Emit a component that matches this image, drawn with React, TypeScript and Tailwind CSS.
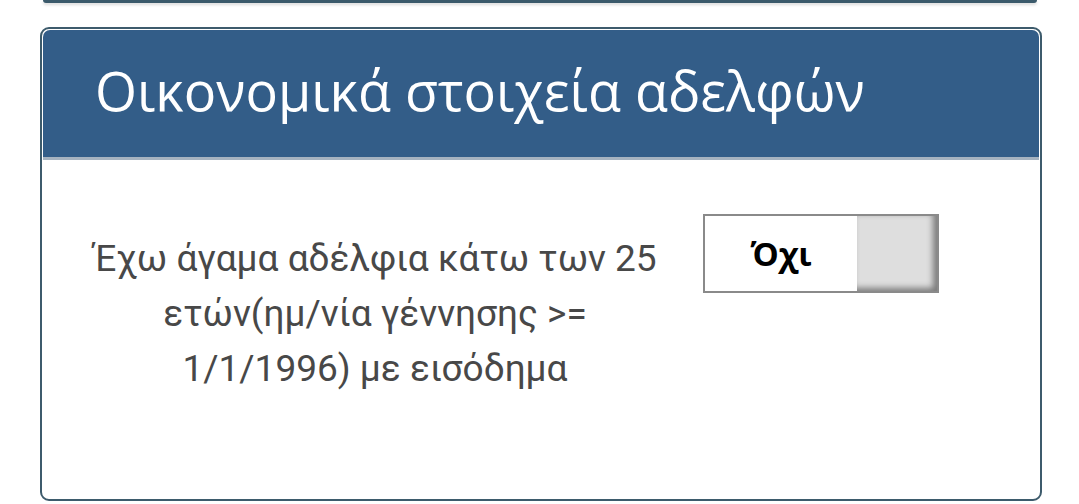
import React from 'react';

const ToggleSwitch: React.FC<{ label: string }> = ({ label }) => {
    return (
        <div className="flex h-[79px] w-[236px] border-2 border-[#8a8a8a] bg-white">
            <div
                className="flex flex-1 items-center justify-center font-bold text-black text-[33px]"
                style={{ fontFamily: '"Open Sans", "DejaVu Sans", sans-serif' }}
            >
                {label}
            </div>
            <div className="w-[80px] bg-[#dedede] shadow-[inset_-4px_-3px_6px_rgba(0,0,0,0.45)]"></div>
        </div>
    );
};

export default function App() {
    return (
        <div className="w-[1079px] h-[504px] bg-white overflow-hidden">
            {/* tail of the previous card */}
            <div className="ml-[43px] w-[994px] h-[3px] bg-[#3b5a6b] rounded-b-[3px] shadow-[0_2px_3px_rgba(0,0,0,0.15)]"></div>

            <div className="ml-[40px] w-[1002px] mt-[24px] h-[474px] border-2 border-[#3d5b6c] rounded-[9px] p-px flex flex-col">
                <div className="h-[130px] bg-[#335d88] rounded-t-[7px] flex items-center pl-[52px] pb-[8px] border-b-[3px] border-[#a6b3c0]">
                    <h2
                        className="text-white text-[54px] leading-none"
                        style={{ fontFamily: '"Open Sans", "Noto Sans", sans-serif' }}
                    >
                        Οικονομικά στοιχεία αδελφών
                    </h2>
                </div>

                <div className="flex items-start pt-[54px] pl-[37px]">
                    <div
                        className="w-[590px] pt-[17px] text-center text-[#484848] text-[37px] leading-[55px]"
                        style={{ fontFamily: 'Roboto, "Noto Sans", sans-serif' }}
                    >
                        Έχω άγαμα αδέλφια κάτω των 25 ετών(ημ/νία γέννησης &gt;= 1/1/1996) με εισόδημα
                    </div>
                    <div className="ml-[33px]">
                        <ToggleSwitch label="Όχι" />
                    </div>
                </div>
            </div>
        </div>
    );
}
